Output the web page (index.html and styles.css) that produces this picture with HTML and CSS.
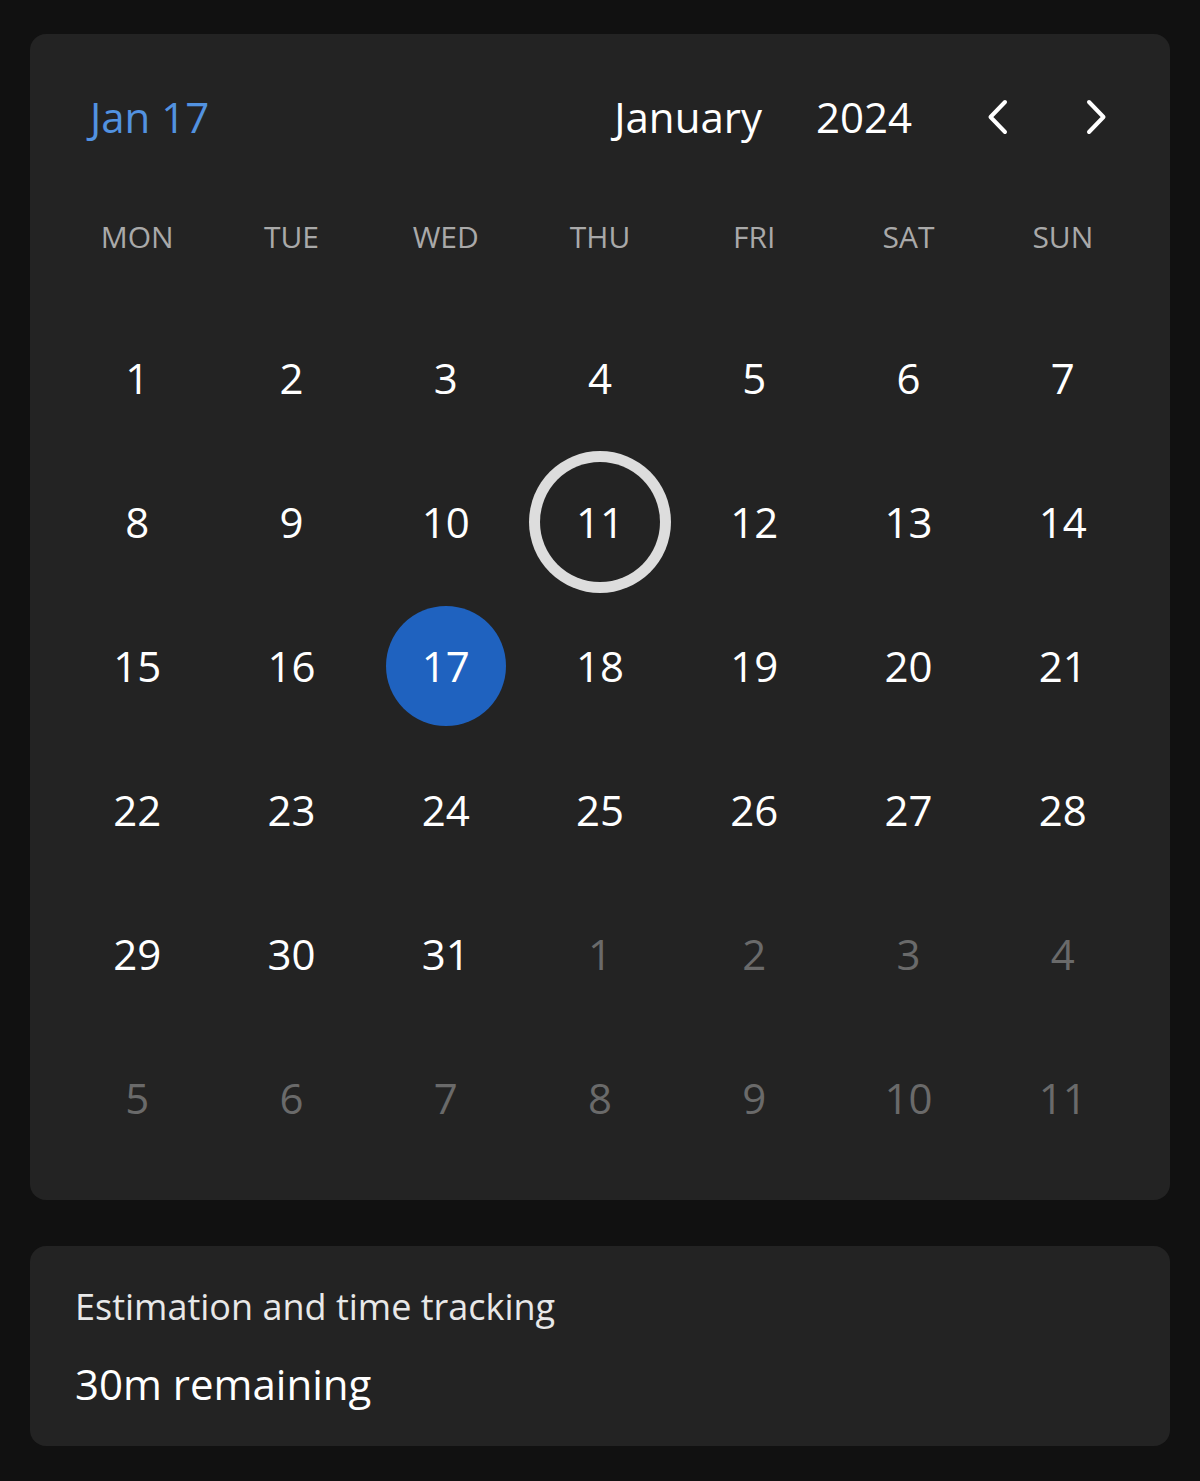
FILE: index.html
```html
<!DOCTYPE html>
<html lang="en">
<head>
<meta charset="utf-8">
<title>Calendar</title>
<link rel="stylesheet" href="styles.css">
</head>
<body>
<main class="page">
  <section class="card calendar">
    <header class="cal-header">
      <div class="selected-label">Jan 17</div>
      <div class="nav">
        <span class="month">January</span>
        <span class="year">2024</span>
        <button class="nav-btn prev" aria-label="Previous month">
          <svg width="24" height="38" viewBox="0 0 24 38"><path d="M19 4 L4.5 19 L19 34" fill="none" stroke="#ffffff" stroke-width="4" stroke-linecap="round" stroke-linejoin="round"/></svg>
        </button>
        <button class="nav-btn next" aria-label="Next month">
          <svg width="24" height="38" viewBox="0 0 24 38"><path d="M5 4 L19.5 19 L5 34" fill="none" stroke="#ffffff" stroke-width="4" stroke-linecap="round" stroke-linejoin="round"/></svg>
        </button>
      </div>
    </header>
    <div class="grid weekdays">
      <div class="wd">MON</div><div class="wd">TUE</div><div class="wd">WED</div><div class="wd">THU</div><div class="wd">FRI</div><div class="wd">SAT</div><div class="wd">SUN</div>
    </div>
    <div class="grid days">
      <div class="cell"><span class="num">1</span></div>
      <div class="cell"><span class="num">2</span></div>
      <div class="cell"><span class="num">3</span></div>
      <div class="cell"><span class="num">4</span></div>
      <div class="cell"><span class="num">5</span></div>
      <div class="cell"><span class="num">6</span></div>
      <div class="cell"><span class="num">7</span></div>

      <div class="cell"><span class="num">8</span></div>
      <div class="cell"><span class="num">9</span></div>
      <div class="cell"><span class="num">10</span></div>
      <div class="cell"><span class="num today">11</span></div>
      <div class="cell"><span class="num">12</span></div>
      <div class="cell"><span class="num">13</span></div>
      <div class="cell"><span class="num">14</span></div>

      <div class="cell"><span class="num">15</span></div>
      <div class="cell"><span class="num">16</span></div>
      <div class="cell"><span class="num selected">17</span></div>
      <div class="cell"><span class="num">18</span></div>
      <div class="cell"><span class="num">19</span></div>
      <div class="cell"><span class="num">20</span></div>
      <div class="cell"><span class="num">21</span></div>

      <div class="cell"><span class="num">22</span></div>
      <div class="cell"><span class="num">23</span></div>
      <div class="cell"><span class="num">24</span></div>
      <div class="cell"><span class="num">25</span></div>
      <div class="cell"><span class="num">26</span></div>
      <div class="cell"><span class="num">27</span></div>
      <div class="cell"><span class="num">28</span></div>

      <div class="cell"><span class="num">29</span></div>
      <div class="cell"><span class="num">30</span></div>
      <div class="cell"><span class="num">31</span></div>
      <div class="cell"><span class="num muted">1</span></div>
      <div class="cell"><span class="num muted">2</span></div>
      <div class="cell"><span class="num muted">3</span></div>
      <div class="cell"><span class="num muted">4</span></div>

      <div class="cell"><span class="num muted">5</span></div>
      <div class="cell"><span class="num muted">6</span></div>
      <div class="cell"><span class="num muted">7</span></div>
      <div class="cell"><span class="num muted">8</span></div>
      <div class="cell"><span class="num muted">9</span></div>
      <div class="cell"><span class="num muted">10</span></div>
      <div class="cell"><span class="num muted">11</span></div>
    </div>
  </section>

  <section class="card tracking">
    <div class="tracking-label">Estimation and time tracking</div>
    <div class="tracking-value">30m remaining</div>
  </section>
</main>
</body>
</html>
```

FILE: styles.css
```css
* {
  box-sizing: border-box;
}

html, body {
  margin: 0;
  padding: 0;
  background: #111111;
}

body {
  font-family: "Open Sans", "Noto Sans", sans-serif;
  color: #ffffff;
}

.page {
  padding: 34px 30px;
  display: flex;
  flex-direction: column;
  gap: 46px;
}

.card {
  background: #232323;
  border-radius: 16px;
}

.calendar {
  padding: 32px 30px 30px;
}

.cal-header {
  height: 102px;
  display: flex;
  align-items: center;
  justify-content: space-between;
  padding: 0 32px 0 30px;
}

.selected-label {
  font-size: 42px;
  line-height: 56px;
  color: #5292e0;
}

.nav {
  display: flex;
  align-items: center;
}

.month,
.year {
  font-size: 42px;
  line-height: 56px;
  color: #ffffff;
}

.year {
  margin-left: 54px;
}

.nav-btn {
  background: none;
  border: 0;
  padding: 0;
  margin: 0;
  display: flex;
  align-items: center;
  justify-content: center;
  cursor: pointer;
}

.prev {
  margin-left: 74px;
}

.next {
  margin-left: 74px;
}

.grid {
  display: grid;
  grid-template-columns: repeat(7, 1fr);
}

.weekdays {
  height: 138px;
  align-items: center;
}

.wd {
  text-align: center;
  font-size: 30px;
  line-height: 40px;
  color: #a9a9a9;
}

.days {
  grid-auto-rows: 144px;
}

.cell {
  display: flex;
  align-items: center;
  justify-content: center;
}

.num {
  width: 120px;
  height: 120px;
  border-radius: 50%;
  display: flex;
  align-items: center;
  justify-content: center;
  font-size: 42px;
  line-height: 56px;
  color: #ffffff;
}

.num.muted {
  color: #6a6a6a;
}

.num.selected {
  background: #1f62bf;
}

.num.today {
  box-shadow: 0 0 0 11px #dddddd;
}

.tracking {
  height: 200px;
  padding: 37px 45px 0;
}

.tracking-label {
  font-size: 36px;
  line-height: 48px;
  color: #e8e8e8;
}

.tracking-value {
  margin-top: 25px;
  font-size: 42px;
  line-height: 56px;
  color: #ffffff;
}
```
